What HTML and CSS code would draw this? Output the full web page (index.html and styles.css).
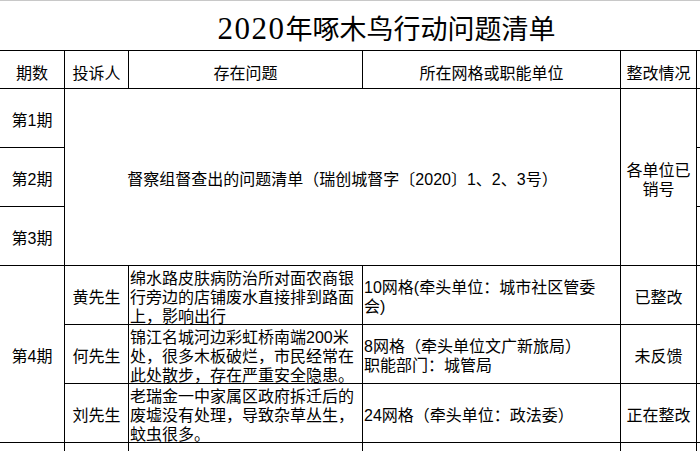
FILE: index.html
```html
<!DOCTYPE html>
<html lang="zh-CN">
<head>
<meta charset="utf-8">
<title>2020年啄木鸟行动问题清单</title>
<link rel="stylesheet" href="styles.css">
</head>
<body>
<div class="sheet">
  <h1 class="title"><span class="num">2020</span>年啄木鸟行动问题清单</h1>
  <div class="grid">
    <div class="cell head">期数</div>
    <div class="cell head">投诉人</div>
    <div class="cell head">存在问题</div>
    <div class="cell head">所在网格或职能单位</div>
    <div class="cell head">整改情况</div>
    <div class="cell"></div>

    <div class="cell center">第1期</div>
    <div class="cell center merged-wide">督察组督查出的问题清单（瑞创城督字〔2020〕1、2、3号）</div>
    <div class="cell center rows-3">各单位已<br>销号</div>
    <div class="cell"></div>
    <div class="cell center">第2期</div>
    <div class="cell"></div>
    <div class="cell center">第3期</div>
    <div class="cell"></div>

    <div class="cell center rows-3">第4期</div>
    <div class="cell center">黄先生</div>
    <div class="cell text">绵水路皮肤病防治所对面农商银<br>行旁边的店铺废水直接排到路面<br>上，影响出行</div>
    <div class="cell text">10网格(牵头单位：城市社区管委<br>会)</div>
    <div class="cell center">已整改</div>
    <div class="cell"></div>

    <div class="cell center">何先生</div>
    <div class="cell text">锦江名城河边彩虹桥南端200米<br>处，很多木板破烂，市民经常在<br>此处散步，存在严重安全隐患。</div>
    <div class="cell text">8网格（牵头单位文广新旅局）<br>职能部门：城管局</div>
    <div class="cell center">未反馈</div>
    <div class="cell"></div>

    <div class="cell center">刘先生</div>
    <div class="cell text">老瑞金一中家属区政府拆迁后的<br>废墟没有处理，导致杂草丛生，<br>蚊虫很多。</div>
    <div class="cell text">24网格（牵头单位：政法委）</div>
    <div class="cell center">正在整改</div>
    <div class="cell"></div>

    <div class="cell"></div>
    <div class="cell"></div>
    <div class="cell"></div>
    <div class="cell"></div>
    <div class="cell"></div>
    <div class="cell"></div>
  </div>
</div>
</body>
</html>
```

FILE: styles.css
```css
html, body {
  margin: 0;
  padding: 0;
  background: #fff;
  overflow: hidden;
}

body {
  width: 700px;
  height: 451px;
  font-family: "Liberation Sans", "Noto Sans CJK SC", sans-serif;
  color: #000;
}

.sheet {
  border-top: 1px solid #c8c8c8;
  width: 700px;
}

.title {
  margin: 0;
  height: 47px;
  padding-top: 2px;
  line-height: 50px;
  padding-left: 73px;
  text-align: center;
  font-family: "Noto Sans CJK SC", sans-serif;
  font-size: 27px;
  font-weight: normal;
  width: 627px;
  white-space: nowrap;
}

.title .num {
  font-family: "Liberation Serif", serif;
  font-size: 31px;
  letter-spacing: 1.5px;
}

.grid {
  display: grid;
  grid-template-columns: 64px 63px 233px 257px 75px 3px;
  grid-template-rows: 37px repeat(6, 58px) 8px;
  gap: 1px;
  background: #000;
  padding-top: 1px;
}

.cell {
  background: #fff;
  font-size: 16px;
  line-height: 19px;
  white-space: nowrap;
}

.head {
  display: flex;
  align-items: center;
  justify-content: center;
  padding-top: 7px;
}

.center {
  display: flex;
  align-items: center;
  justify-content: center;
  text-align: center;
  padding-top: 5px;
}

.text {
  display: flex;
  align-items: center;
  padding-left: 1px;
  padding-top: 4px;
}

.merged-wide {
  grid-column: span 3;
  grid-row: span 3;
}

.rows-3 {
  grid-row: span 3;
}
```
